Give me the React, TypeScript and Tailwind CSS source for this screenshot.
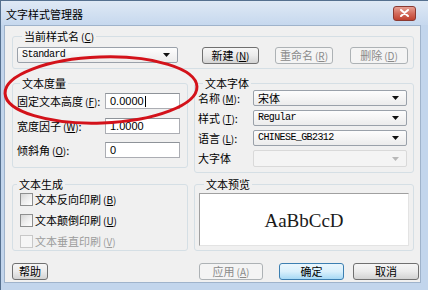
import React from "react";

const CJK = "font-['Noto_Sans_CJK_SC','Noto_Sans',sans-serif]";
const MONO = "font-['Liberation_Mono',monospace]";

function Mn({ c }: { c: string }) {
  return (
    <span className="ml-[2px] text-[10px]">
      (<span className="underline">{c}</span>)
    </span>
  );
}

function Btn({
  children,
  w,
  disabled,
  primary,
}: {
  children: React.ReactNode;
  w: string;
  disabled?: boolean;
  primary?: boolean;
}) {
  const tone = disabled
    ? "border-[#adb2b5] bg-[#f4f4f4] text-[#8a8a8a]"
    : primary
    ? "border-[#3c7fb1] bg-linear-to-b from-[#eaf6fd] via-[#d9f0fc] to-[#a7d9f5] text-black"
    : "border-[#707070] bg-linear-to-b from-[#f6f6f6] via-[#ebebeb] to-[#d3d3d3] text-black";
  return (
    <div
      className={`flex h-[17px] shrink-0 items-center justify-center rounded-[3px] border text-[11px] leading-none ${tone} ${w}`}
    >
      {children}
    </div>
  );
}

function Arrow({ disabled }: { disabled?: boolean }) {
  return (
    <svg width="7" height="4" viewBox="0 0 7 4" className="mr-[7px] shrink-0">
      <path d="M0 0H7L3.5 4Z" fill={disabled ? "#b8b8b8" : "#111"} />
    </svg>
  );
}

function Combo({
  children,
  w,
  mono,
  disabled,
  h = "h-[16px]",
}: {
  children?: React.ReactNode;
  w: string;
  mono?: boolean;
  disabled?: boolean;
  h?: string;
}) {
  return (
    <div
      className={`flex ${h} ${w} shrink-0 items-center justify-between rounded-[2px] border ${
        disabled
          ? "border-[#d9d9d9] bg-[#f4f4f4]"
          : "border-[#9aa1aa] bg-linear-to-b from-[#fdfdfd] to-[#ececec]"
      }`}
    >
      <span
        className={`pl-[4px] ${
          mono ? `${MONO} text-[10px] tracking-[-0.6px]` : "text-[11px]"
        } leading-none text-black`}
      >
        {children}
      </span>
      <Arrow disabled={disabled} />
    </div>
  );
}

function Input({ value, caret }: { value: string; caret?: boolean }) {
  return (
    <div className="ml-auto mr-[7px] flex h-[16px] w-[75px] items-center border border-[#abadb3] border-t-[#8e9399] bg-white pl-[4px]">
      <span className="font-['Liberation_Sans',sans-serif] text-[11px] leading-none text-black">
        {value}
      </span>
      {caret && <span className="ml-[1px] h-[11px] w-px bg-black" />}
    </div>
  );
}

function Check({ label, m, disabled }: { label: string; m: string; disabled?: boolean }) {
  return (
    <div className="flex h-[14px] items-center">
      <span
        className={`ml-[7px] h-[13px] w-[13px] shrink-0 border ${
          disabled
            ? "border-[#c8c8c8] bg-[#f6f6f6]"
            : "border-[#8e8f8f] bg-linear-to-br from-[#d6d6d6] via-[#eeeeee] to-white"
        }`}
      />
      <span className={`ml-[2px] text-[11px] leading-none ${disabled ? "text-[#9c9c9c]" : "text-black"}`}>
        {label}
        <Mn c={m} />
      </span>
    </div>
  );
}

function Legend({ children, ml }: { children: React.ReactNode; ml: string }) {
  return <legend className={`${ml} px-[2px] text-[11px] leading-[12px] text-black`}>{children}</legend>;
}

export default function App() {
  return (
    <div className={`relative h-[290px] w-[428px] overflow-hidden bg-[#c2d5ec] ${CJK}`}>
      <div className="flex h-[290px] w-[428px] flex-col border-l border-t border-[#55708f]">
        {/* title bar */}
        <div className="flex h-[24px] shrink-0 items-center justify-between bg-linear-to-b from-[#dfe9f5] to-[#c6d8ee] pl-[5px] pr-[12px]">
          <span className="mt-[2px] text-[11px] leading-none text-black">文字样式管理器</span>
          <div className="flex h-[15px] w-[23px] items-center justify-center rounded-[3px] border border-[#8a3a32] bg-linear-to-b from-[#e6a094] via-[#d36b5c] to-[#c0412f]">
            <svg width="9" height="8" viewBox="0 0 9 8">
              <path d="M1 1L8 7M8 1L1 7" stroke="#fff" strokeWidth="2" strokeLinecap="round" />
            </svg>
          </div>
        </div>
        {/* client */}
        <div className="ml-[3px] mr-[7px] flex h-[258px] flex-col border border-[#9fb3cb] bg-[#f0f0f0] pl-[7px] pr-[6px] pt-[4px]">
          <fieldset className="rounded-[3px] border border-[#d5dfe5] px-[4px] pb-[4px] pt-[4px]">
            <Legend ml="ml-[5px]">
              当前样式名
              <Mn c="C" />
            </Legend>
            <div className="flex items-start">
              <Combo w="w-[161px]" mono>
                Standard
              </Combo>
              <div className="ml-[24px]">
                <Btn w="w-[57px]">
                  新建
                  <Mn c="N" />
                </Btn>
              </div>
              <div className="ml-[16px]">
                <Btn w="w-[58px]" disabled>
                  重命名
                  <Mn c="R" />
                </Btn>
              </div>
              <div className="ml-[17px]">
                <Btn w="w-[58px]" disabled>
                  删除
                  <Mn c="D" />
                </Btn>
              </div>
            </div>
          </fieldset>

          <div className="mt-[8px] flex gap-[6px]">
            {/* left column */}
            <div className="flex w-[176px] shrink-0 flex-col">
              <fieldset className="rounded-[3px] border border-[#d5dfe5] pb-[9px] pl-[4px] pt-[4px]">
                <Legend ml="ml-[3px]">文本度量</Legend>
                <div className="flex h-[16px] items-center">
                  <span className="text-[11px] leading-none">
                    固定文本高度
                    <Mn c="F" />:
                  </span>
                  <Input value="0.0000" caret />
                </div>
                <div className="mt-[9px] flex h-[16px] items-center">
                  <span className="text-[11px] leading-none">
                    宽度因子
                    <Mn c="W" />:
                  </span>
                  <Input value="1.0000" />
                </div>
                <div className="mt-[8px] flex h-[16px] items-center">
                  <span className="text-[11px] leading-none">
                    倾斜角
                    <Mn c="O" />:
                  </span>
                  <Input value="0" />
                </div>
              </fieldset>
              <fieldset className="mt-[10px] flex flex-col gap-[7px] rounded-[3px] border border-[#d5dfe5] pb-[2px] pt-[2px]">
                <Legend ml="ml-[4px]">文本生成</Legend>
                <Check label="文本反向印刷" m="B" />
                <Check label="文本颠倒印刷" m="U" />
                <Check label="文本垂直印刷" m="V" disabled />
              </fieldset>
            </div>

            {/* right column */}
            <div className="flex w-[220px] shrink-0 flex-col">
              <fieldset className="flex flex-col gap-[4px] rounded-[3px] border border-[#d5dfe5] pb-[5px] pl-[3px] pt-[1px]">
                <Legend ml="ml-[5px]">文本字体</Legend>
                <div className="flex h-[16px] items-center justify-between pr-[6px]">
                  <span className="text-[11px] leading-none">
                    名称
                    <Mn c="M" />:
                  </span>
                  <Combo w="w-[154px]">宋体</Combo>
                </div>
                <div className="flex h-[16px] items-center justify-between pr-[6px]">
                  <span className="text-[11px] leading-none">
                    样式
                    <Mn c="T" />:
                  </span>
                  <Combo w="w-[154px]" mono>
                    Regular
                  </Combo>
                </div>
                <div className="flex h-[16px] items-center justify-between pr-[6px]">
                  <span className="text-[11px] leading-none">
                    语言
                    <Mn c="L" />:
                  </span>
                  <Combo w="w-[154px]" mono>
                    CHINESE_GB2312
                  </Combo>
                </div>
                <div className="flex h-[17px] items-center justify-between pr-[6px]">
                  <span className="text-[11px] leading-none">大字体</span>
                  <Combo w="w-[154px]" h="h-[17px]" disabled />
                </div>
              </fieldset>
              <fieldset className="mt-[5px] rounded-[3px] border border-[#d5dfe5] px-[4px] pb-[4px] pt-[3px]">
                <Legend ml="ml-[5px]">文本预览</Legend>
                <div className="flex h-[53px] items-center justify-center border border-[#a0a0a0] border-b-[#e3e3e3] border-r-[#e3e3e3] bg-white">
                  <span className="mt-[2px] font-['Liberation_Serif',serif] text-[19px] leading-none text-[#1a1a1a]">
                    AaBbCcD
                  </span>
                </div>
              </fieldset>
            </div>
          </div>

          <div className="mt-[12px] flex items-start">
            <Btn w="w-[36px]">帮助</Btn>
            <div className="ml-[151px]">
              <Btn w="w-[64px]" disabled>
                应用
                <Mn c="A" />
              </Btn>
            </div>
            <div className="ml-[16px]">
              <Btn w="w-[65px]" primary>
                确定
              </Btn>
            </div>
            <div className="ml-[9px]">
              <Btn w="w-[66px]">取消</Btn>
            </div>
          </div>
        </div>
      </div>

      <svg
        className="pointer-events-none absolute left-0 top-0"
        width="428"
        height="290"
        viewBox="0 0 428 290"
      >
        <ellipse
          cx="101"
          cy="90"
          rx="96"
          ry="33"
          fill="none"
          stroke="#d3121a"
          strokeWidth="3"
          transform="rotate(-2 101 90)"
        />
      </svg>
    </div>
  );
}
